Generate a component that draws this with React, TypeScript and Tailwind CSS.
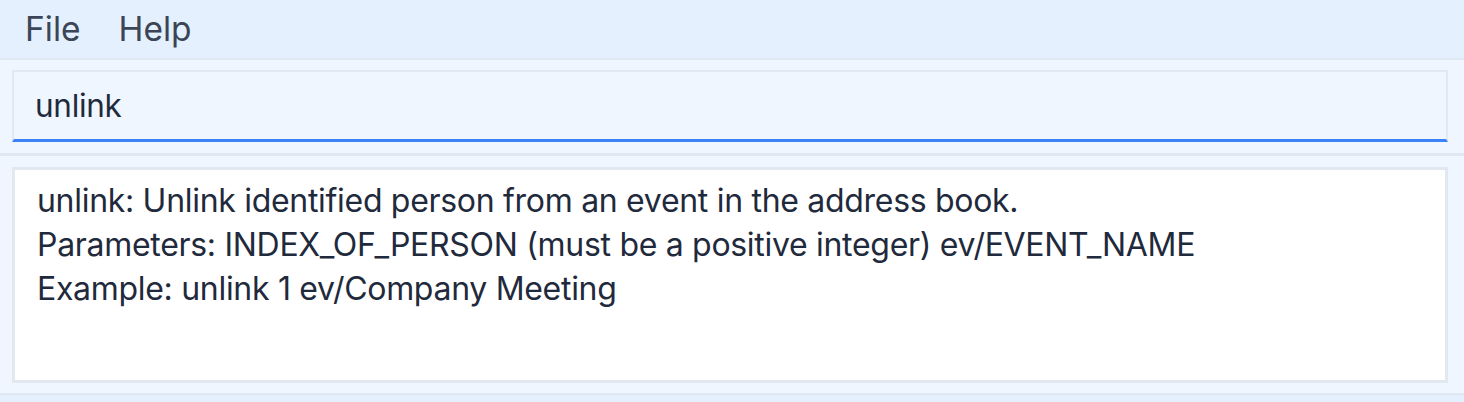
import React from 'react';

const lines = [
  'unlink: Unlink identified person from an event in the address book.',
  'Parameters: INDEX_OF_PERSON (must be a positive integer) ev/EVENT_NAME',
  'Example: unlink 1 ev/Company Meeting',
];

export default function App() {
  return (
    <div className="w-[1464px] h-[402px] bg-[#eff6ff] flex flex-col font-['Inter',sans-serif] overflow-hidden">
      <div className="h-[60px] shrink-0 bg-[#e4f0fd] border-b-2 border-[#dfe7f0] flex items-center gap-[38px] px-[25px] text-[33.5px] text-[#3b4556]">
        <span>File</span>
        <span>Help</span>
      </div>

      <div className="shrink-0 pl-[12px] pr-[16px] pt-[10px] pb-[11px]">
        <div className="h-[72px] border-2 border-[#e2e8f0] border-b-[3px] border-b-[#3b82f6] bg-[#eff6ff] flex items-center px-[21px] text-[31.5px] tracking-[-0.3px] text-[#1f2a3c]">
          unlink
        </div>
      </div>

      <div className="h-[3px] shrink-0 bg-[#dfe7f0]" />

      <div className="shrink-0 pl-[12px] pr-[16px] pt-[11px] pb-[10px]">
        <div className="h-[216px] bg-white border-[3px] border-[#e2e8f0] px-[22px] pt-[9px] text-[32px] tracking-[-0.3px] leading-[44px] text-[#1f2a3c]">
          {lines.map((l) => (
            <div key={l} className="whitespace-nowrap">{l}</div>
          ))}
        </div>
      </div>

      <div className="flex-1 border-t-2 border-[#dfe7f0] bg-[#e4f0fd]" />
    </div>
  );
}
